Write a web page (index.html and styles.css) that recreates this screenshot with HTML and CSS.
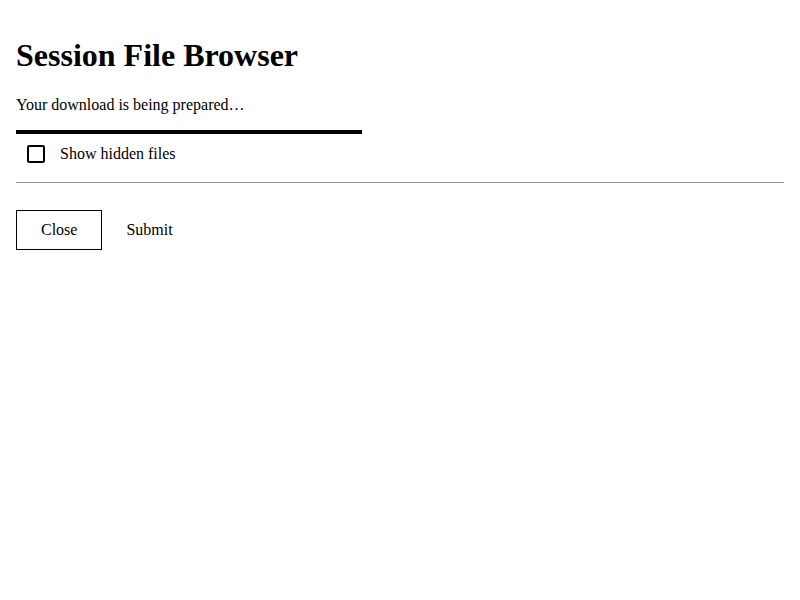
FILE: index.html
```html
<!DOCTYPE html>
<html>
<head>
<meta charset="utf-8">
<link rel="stylesheet" href="styles.css">
</head>
<body>
<main class="page">
  <h1 class="title">Session File Browser</h1>
  <p class="status">Your download is being prepared…</p>
  <div class="progress"></div>
  <label class="check-row">
    <span class="checkbox"></span>
    <span class="check-label">Show hidden files</span>
  </label>
  <hr class="divider">
  <div class="actions">
    <button class="btn btn-outline">Close</button>
    <button class="btn btn-plain">Submit</button>
  </div>
</main>
</body>
</html>
```

FILE: styles.css
```css
html, body {
  margin: 0;
  padding: 0;
  background: #fff;
}
body {
  font-family: "Liberation Serif", "Times New Roman", serif;
  color: #000;
  font-size: 16px;
}
.page {
  padding: 0 16px;
  display: flex;
  flex-direction: column;
  align-items: flex-start;
}
.title {
  font-size: 32px;
  font-weight: bold;
  margin: 37px 0 0;
  line-height: 37px;
}
.status {
  margin: 22px 0 0;
  line-height: 18px;
}
.progress {
  margin-top: 16px;
  width: 346px;
  height: 4px;
  background: #000;
}
.check-row {
  display: flex;
  align-items: center;
  height: 40px;
  margin-left: 11px;
}
.checkbox {
  width: 14px;
  height: 14px;
  border: 2px solid #000;
  border-radius: 2px;
  margin-right: 15px;
}
.check-label {
  line-height: 18px;
}
.divider {
  align-self: stretch;
  margin: 8px 0 0;
  border: 0;
  height: 1px;
  background: #999;
}
.actions {
  display: flex;
  margin-top: 27px;
}
.btn {
  font-family: inherit;
  font-size: 16px;
  color: #000;
  background: transparent;
  height: 40px;
  padding: 0 24px;
  border: 1px solid transparent;
  border-radius: 0;
}
.btn-outline {
  border-color: #000;
}
.btn-plain {
  padding-left: 23px;
}
```
